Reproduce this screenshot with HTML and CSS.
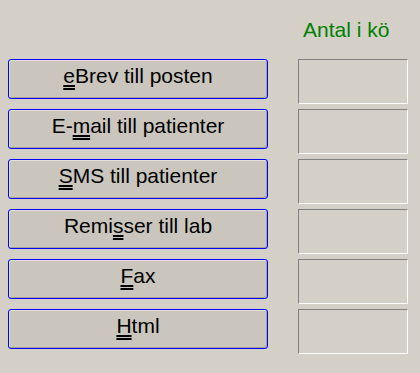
FILE: index.html
```html
<!DOCTYPE html>
<html lang="sv">
<head>
<meta charset="utf-8">
<title>Utskick</title>
<link rel="stylesheet" href="styles.css">
</head>
<body>
<div class="panel">
  <div class="head">Antal i kö</div>
  <button class="btn"><u>e</u>Brev till posten</button>
  <div class="count"></div>
  <button class="btn">E-<u>m</u>ail till patienter</button>
  <div class="count"></div>
  <button class="btn"><u>S</u>MS till patienter</button>
  <div class="count"></div>
  <button class="btn">Remi<u>s</u>ser till lab</button>
  <div class="count"></div>
  <button class="btn"><u>F</u>ax</button>
  <div class="count"></div>
  <button class="btn"><u>H</u>tml</button>
  <div class="count"></div>
</div>
</body>
</html>
```
FILE: styles.css
```css
html, body {
  margin: 0;
  padding: 0;
  background: #d4d0c8;
}
body {
  font-family: "Liberation Sans", Arial, sans-serif;
  font-size: 21px;
  line-height: 24px;
  color: #000;
  width: 420px;
  height: 373px;
  overflow: hidden;
}
.panel {
  display: grid;
  grid-template-columns: 260px 110px;
  grid-template-rows: 54px;
  grid-auto-rows: 45px;
  column-gap: 30px;
  row-gap: 5px;
  padding-left: 8px;
}
.head {
  grid-column: 2;
  padding: 18px 0 0 5px;
  color: #008000;
}
.btn {
  grid-column: 1;
  box-sizing: border-box;
  height: 40px;
  margin: 0;
  padding: 4px 0 0 0;
  display: flex;
  justify-content: center;
  align-items: flex-start;
  font: inherit;
  color: #000;
  background: #cac6be;
  border: 1px solid #0000ff;
  border-radius: 3px;
  box-shadow: inset 1px 1px 0 #e4e1db, inset -1px -1px 0 #a6a29a;
  cursor: default;
}
.btn u {
  text-decoration: underline double;
  text-decoration-thickness: 1.5px;
  text-underline-offset: 2px;
}
.count {
  grid-column: 2;
  box-sizing: border-box;
  height: 45px;
  border-top: 1px solid #808080;
  border-left: 1px solid #808080;
  border-bottom: 1px solid #ffffff;
  border-right: 1px solid #ffffff;
}
```
